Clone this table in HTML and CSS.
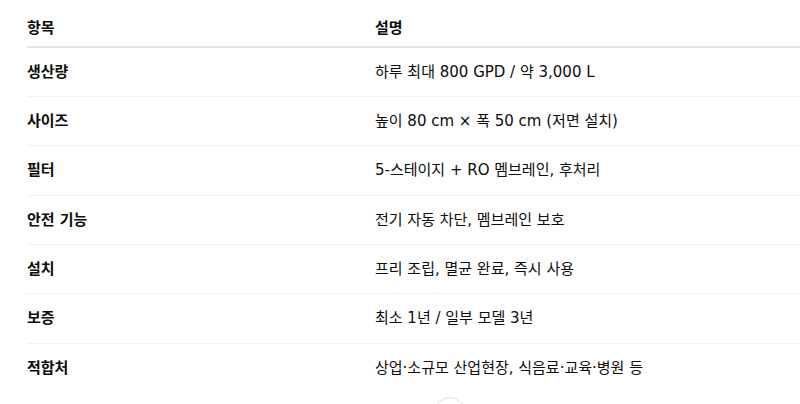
FILE: index.html
```html
<!DOCTYPE html>
<html lang="ko">
<head>
<meta charset="utf-8">
<link rel="stylesheet" href="styles.css">
</head>
<body>
<div class="page">
  <table class="spec">
    <thead>
      <tr><th class="col-item">항목</th><th>설명</th></tr>
    </thead>
    <tbody>
      <tr><td class="item">생산량</td><td>하루 최대 800 GPD / 약 3,000 L</td></tr>
      <tr><td class="item">사이즈</td><td>높이 80 cm × 폭 50 cm (저면 설치)</td></tr>
      <tr><td class="item">필터</td><td>5-스테이지 + RO 멤브레인, 후처리</td></tr>
      <tr><td class="item">안전 기능</td><td>전기 자동 차단, 멤브레인 보호</td></tr>
      <tr><td class="item">설치</td><td>프리 조립, 멸균 완료, 즉시 사용</td></tr>
      <tr><td class="item">보증</td><td>최소 1년 / 일부 모델 3년</td></tr>
      <tr><td class="item">적합처</td><td>상업·소규모 산업현장, 식음료·교육·병원 등</td></tr>
    </tbody>
  </table>
  <div class="scroll-btn"></div>
</div>
</body>
</html>
```

FILE: styles.css
```css
html, body {
  margin: 0;
  padding: 0;
  background: #ffffff;
  overflow: hidden;
}
body {
  font-family: "DejaVu Sans", "Noto Sans CJK KR", sans-serif;
  color: #0d0d0d;
  font-size: 15px;
}
.page {
  position: relative;
  height: 404px;
  padding: 9.5px 0 0 27px;
  box-sizing: border-box;
  overflow: hidden;
}
.spec {
  width: 800px;
  border-collapse: collapse;
}
.spec th {
  text-align: left;
  font-weight: 700;
  padding: 7px 0;
  line-height: 22.3px;
  border-bottom: 2px solid #e3e3e3;
}
.spec .col-item {
  width: 348px;
}
.spec td {
  padding: 13px 0;
  line-height: 22.3px;
  border-bottom: 1px solid #f0f0f0;
}
.spec tbody tr:last-child td {
  border-bottom: none;
}
.spec .item {
  font-weight: 700;
}
.scroll-btn {
  position: absolute;
  left: 434px;
  top: 397px;
  width: 32px;
  height: 32px;
  border-radius: 50%;
  border: 1px solid #e3e3e3;
  background: #fff;
  box-sizing: border-box;
}
```
